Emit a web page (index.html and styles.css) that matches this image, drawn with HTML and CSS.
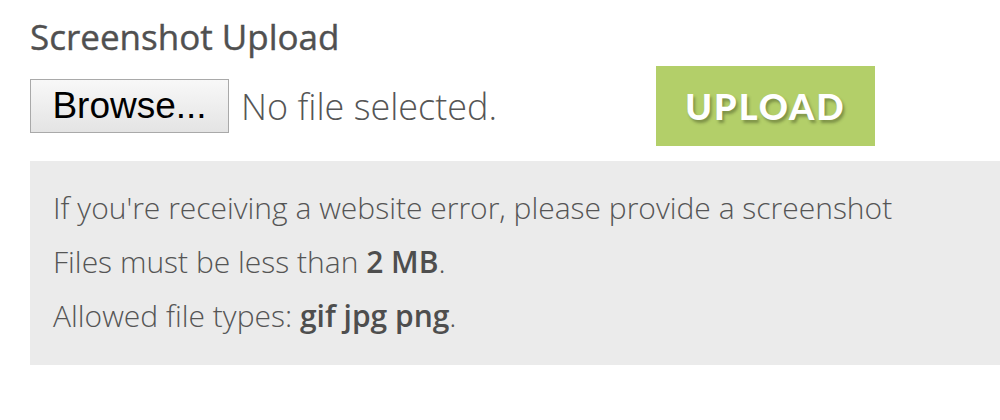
FILE: index.html
```html
<!DOCTYPE html>
<html>
<head>
<meta charset="utf-8">
<link rel="stylesheet" href="styles.css">
</head>
<body>
<div class="page">
  <h2 class="title">Screenshot Upload</h2>
  <div class="upload-row">
    <div class="file-field">
      <button class="browse" type="button">Browse...</button>
      <span class="file-name">No file selected.</span>
    </div>
    <button class="upload" type="button">UPLOAD</button>
  </div>
  <div class="info">
    <p>If you're receiving a website error, please provide a screenshot</p>
    <p>Files must be less than <strong>2 MB</strong>.</p>
    <p>Allowed file types: <strong>gif jpg png</strong>.</p>
  </div>
</div>
</body>
</html>
```

FILE: styles.css
```css
html, body {
  margin: 0;
  padding: 0;
  background: #ffffff;
}
body {
  font-family: "Open Sans", "Lato", sans-serif;
  color: #555555;
  overflow: hidden;
}
.page {
  padding: 14px 0 0 30px;
}
.title {
  margin: 0;
  font-size: 35px;
  font-weight: 500;
  line-height: 46px;
  color: #505050;
  -webkit-text-stroke: 0.4px #505050;
}
.upload-row {
  display: flex;
  align-items: center;
  margin-top: 6px;
  height: 80px;
}
.file-field {
  display: flex;
  align-items: center;
  width: 626px;
}
.browse {
  width: 199px;
  height: 54px;
  border: 1px solid #a9a9a9;
  background: linear-gradient(#f8f8f8, #e4e4e4);
  font-family: "Liberation Sans", Arial, sans-serif;
  font-size: 37px;
  color: #000;
  padding: 0;
  margin: 0;
}
.file-name {
  margin-left: 12px;
  font-size: 36px;
  font-weight: 300;
  color: #555;
}
.upload {
  width: 219px;
  height: 80px;
  border: none;
  margin: 0;
  padding: 0;
  background: #b3cf69;
  color: #ffffff;
  font-family: "Lato", sans-serif;
  font-weight: 900;
  font-size: 36px;
  letter-spacing: 2px;
  text-shadow: 2px 3px 3px rgba(60, 70, 30, 0.45);
}
.info {
  margin-top: 15px;
  background: #ebebeb;
  padding: 20px 0 22px 23px;
  height: 162px;
}
.info p {
  margin: 0;
  font-size: 30px;
  font-weight: 300;
  line-height: 54px;
  color: #555;
  white-space: nowrap;
}
.info strong {
  font-weight: 600;
  color: #4e4e4e;
}
```
